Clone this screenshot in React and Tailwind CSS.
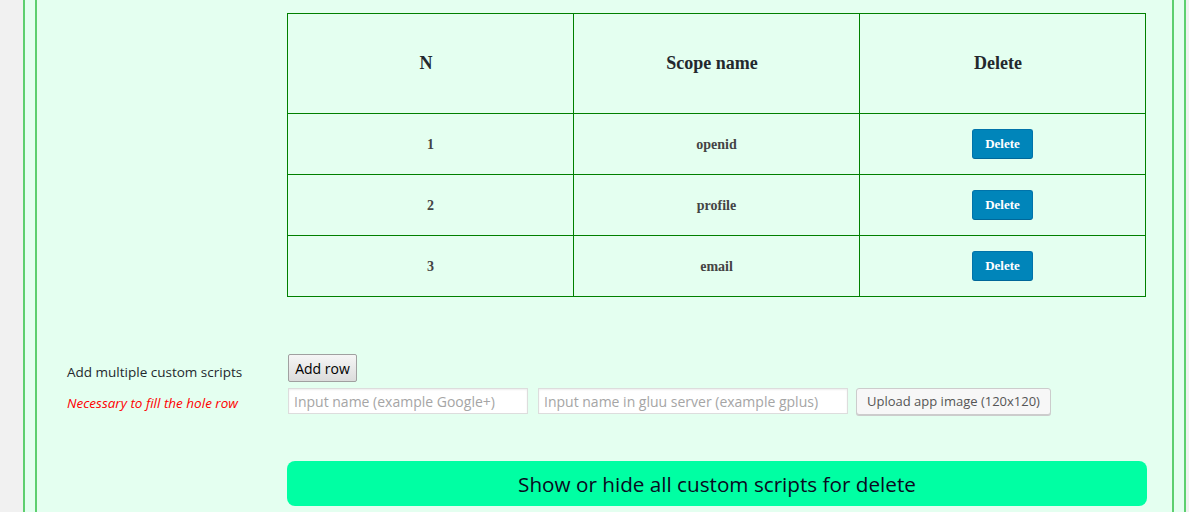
import React from "react";

const rows = [
  { n: "1", name: "openid" },
  { n: "2", name: "profile" },
  { n: "3", name: "email" },
];

function Cell({ children, className = "" }) {
  return (
    <div
      className={
        "flex items-center justify-center border-r border-b border-[#008000] " +
        className
      }
    >
      {children}
    </div>
  );
}

export default function App() {
  return (
    <div className="h-[512px] overflow-hidden bg-[#f1f1f1] font-['Open_Sans',sans-serif]">
      <div className="ml-[23px] h-full w-[1163px] border-x-2 border-[#5dcf6f] bg-[#e4fff0] px-[10px]">
        <div className="h-full border-x-2 border-[#5dcf6f] pt-[13px]">
          {/* Scope table */}
          <div className="ml-[250px] w-[859px] border-l border-t border-[#008000] font-['Liberation_Serif',serif]">
            <div className="grid grid-cols-[286px_286px_286px]">
              <Cell className="h-[100px] pr-[9px] text-[18px] font-bold text-[#23282d]">N</Cell>
              <Cell className="h-[100px] pr-[9px] text-[18px] font-bold text-[#23282d]">Scope name</Cell>
              <Cell className="h-[100px] pr-[9px] text-[18px] font-bold text-[#23282d]">Delete</Cell>
              {rows.map((r) => (
                <React.Fragment key={r.n}>
                  <Cell className="h-[61px] text-[14px] font-bold text-[#444]">{r.n}</Cell>
                  <Cell className="h-[61px] text-[14px] font-bold text-[#444]">{r.name}</Cell>
                  <Cell className="h-[61px]">
                    <button className="h-[30px] w-[61px] rounded-[3px] border border-[#0073aa] border-b-[#006799] bg-[#0085ba] font-['Liberation_Serif',serif] text-[13px] font-bold text-white">
                      Delete
                    </button>
                  </Cell>
                </React.Fragment>
              ))}
            </div>
          </div>

          {/* Custom scripts form */}
          <div className="mt-[57px] flex">
            <div className="w-[250px] pl-[30px] pt-[9px]">
              <div className="h-[18px] text-[13.5px] leading-[18px] text-[#23282d]">
                Add multiple custom scripts
              </div>
              <div className="mt-[14px] h-[17px] text-[13.5px] italic leading-[17px] text-[#ff0000]">
                Necessary to fill the hole row
              </div>
            </div>
            <div className="flex flex-col pl-[1px]">
              <button className="h-[28px] w-[69px] rounded-[2px] border border-[#a0a0a0] bg-gradient-to-b from-[#f6f6f6] to-[#dcdcdc] text-[14px] text-black">
                Add row
              </button>
              <div className="mt-[6px] flex items-start">
                <input
                  className="h-[26px] w-[240px] border border-[#dddddd] bg-white px-[5px] text-[14px] placeholder:text-[#a5a5a5] shadow-[inset_0_1px_2px_rgba(0,0,0,0.07)] outline-none"
                  placeholder="Input name (example Google+)"
                />
                <input
                  className="ml-[10px] h-[26px] w-[310px] border border-[#dddddd] bg-white px-[5px] text-[14px] placeholder:text-[#a5a5a5] shadow-[inset_0_1px_2px_rgba(0,0,0,0.07)] outline-none"
                  placeholder="Input name in gluu server (example gplus)"
                />
                <button className="ml-[8px] h-[27px] w-[195px] rounded-[3px] border border-[#cccccc] bg-[#f7f7f7] text-[13px] text-[#555] shadow-[0_1px_0_#cccccc]">
                  Upload app image (120x120)
                </button>
              </div>
            </div>
          </div>

          <button className="ml-[250px] mt-[46px] h-[45px] w-[860px] rounded-[8px] bg-[#00ffa3] pt-[2px] text-[20.7px] text-[#0a0a1e]">
            Show or hide all custom scripts for delete
          </button>
        </div>
      </div>
    </div>
  );
}
